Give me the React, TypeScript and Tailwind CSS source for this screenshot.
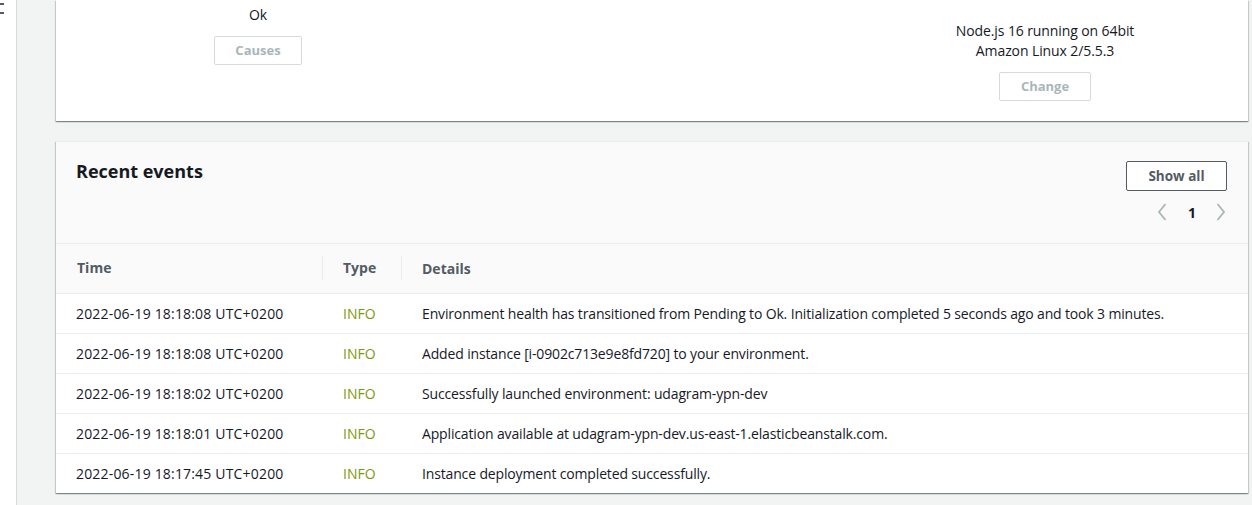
import React from "react";

const rows = [
  ["2022-06-19 18:18:08 UTC+0200", "Environment health has transitioned from Pending to Ok. Initialization completed 5 seconds ago and took 3 minutes."],
  ["2022-06-19 18:18:08 UTC+0200", "Added instance [i-0902c713e9e8fd720] to your environment."],
  ["2022-06-19 18:18:02 UTC+0200", "Successfully launched environment: udagram-ypn-dev"],
  ["2022-06-19 18:18:01 UTC+0200", "Application available at udagram-ypn-dev.us-east-1.elasticbeanstalk.com."],
  ["2022-06-19 18:17:45 UTC+0200", "Instance deployment completed successfully."],
];

const shadow =
  "shadow-[0_1px_1px_0_rgba(0,28,36,0.3),1px_1px_1px_0_rgba(0,28,36,0.15),-1px_1px_1px_0_rgba(0,28,36,0.15)]";

export default function App() {
  return (
    <div
      className="flex w-[1252px] h-[505px] overflow-hidden bg-white text-[14px] text-[#16191f]"
      style={{ fontFamily: '"Open Sans", "Noto Sans", sans-serif' }}
    >
      {/* left strip */}
      <div className="w-[17px] shrink-0 bg-white border-r border-[#d5dbdb] relative">
        <div className="absolute left-0 top-[3px] w-[4px] h-[2px] bg-[#545b64]" />
        <div className="absolute left-0 top-[12px] w-[4px] h-[2px] bg-[#545b64]" />
      </div>
      <div className="flex-1 bg-[#f2f3f3] pl-[39px] pr-[4px]">
        {/* top panel */}
        <div className={`h-[121px] bg-white flex ${shadow}`}>
          <div className="w-[404px] flex flex-col items-center pt-[5px]">
            <div className="leading-[20px] h-[20px]">Ok</div>
            <button className="mt-[11px] w-[88px] h-[29px] border border-[#d5dbdb] rounded-[2px] text-[#aab7b8] font-bold text-[13px] bg-white">
              Causes
            </button>
          </div>
          <div className="flex-1" />
          <div className="w-[316px] mr-[45px] flex flex-col items-center pt-[21px]">
            <div className="leading-[20px] text-center tracking-[-0.1px]">
              Node.js 16 running on 64bit
              <br />
              Amazon Linux 2/5.5.3
            </div>
            <button className="mt-[11px] w-[92px] h-[29px] border border-[#d5dbdb] rounded-[2px] text-[#aab7b8] font-bold text-[13px] bg-white">
              Change
            </button>
          </div>
        </div>

        {/* recent events panel */}
        <div className={`mt-[20px] bg-white border-t border-[#eaeded] ${shadow}`}>
          <div className="h-[102px] bg-[#fafafa] border-b border-[#eaeded] flex justify-between pl-[20px] pr-[21px]">
            <div className="pt-[17px] text-[18px] font-bold leading-[24px]">Recent events</div>
            <div className="pt-[19px] flex flex-col items-end">
              <button className="w-[101px] h-[30px] border border-[#545b64] rounded-[2px] text-[#545b64] font-bold text-[13.5px] bg-white">
                Show all
              </button>
              <div className="mt-[6px] flex items-center h-[30px]">
                <svg width="12" height="20" viewBox="0 0 12 20" className="mr-[20px]">
                  <path d="M9.5 2 L3 10 L9.5 18" fill="none" stroke="#aab7b8" strokeWidth="1.8" />
                </svg>
                <span className="font-bold text-[14px] text-[#16191f] mr-[19px]">1</span>
                <svg width="12" height="20" viewBox="0 0 12 20">
                  <path d="M2.5 2 L9 10 L2.5 18" fill="none" stroke="#aab7b8" strokeWidth="1.8" />
                </svg>
              </div>
            </div>
          </div>
          <table className="w-full border-collapse">
            <thead>
              <tr className="bg-[#fafafa] h-[49px] border-b border-[#eaeded]">
                <th className="text-left font-bold text-[#545b64] pl-[21px] w-[267px] p-0">
                  <div className="border-r border-[#eaeded] h-[24px] leading-[24px]">Time</div>
                </th>
                <th className="text-left font-bold text-[#545b64] pl-[20px] w-[79px] p-0">
                  <div className="border-r border-[#eaeded] h-[24px] leading-[24px]">Type</div>
                </th>
                <th className="text-left font-bold text-[#545b64] pl-[20px] p-0">Details</th>
              </tr>
            </thead>
            <tbody>
              {rows.map((r, i) => (
                <tr key={i} className={`h-[40px] ${i < rows.length - 1 ? "border-b border-[#eaeded]" : ""}`}>
                  <td className="pl-[20px] p-0 tracking-[0.18px]">{r[0]}</td>
                  <td className="pl-[20px] p-0 text-[#7c9a0d]">INFO</td>
                  <td className="pl-[20px] p-0 tracking-[-0.15px]">{r[1]}</td>
                </tr>
              ))}
            </tbody>
          </table>
        </div>
      </div>
    </div>
  );
}
